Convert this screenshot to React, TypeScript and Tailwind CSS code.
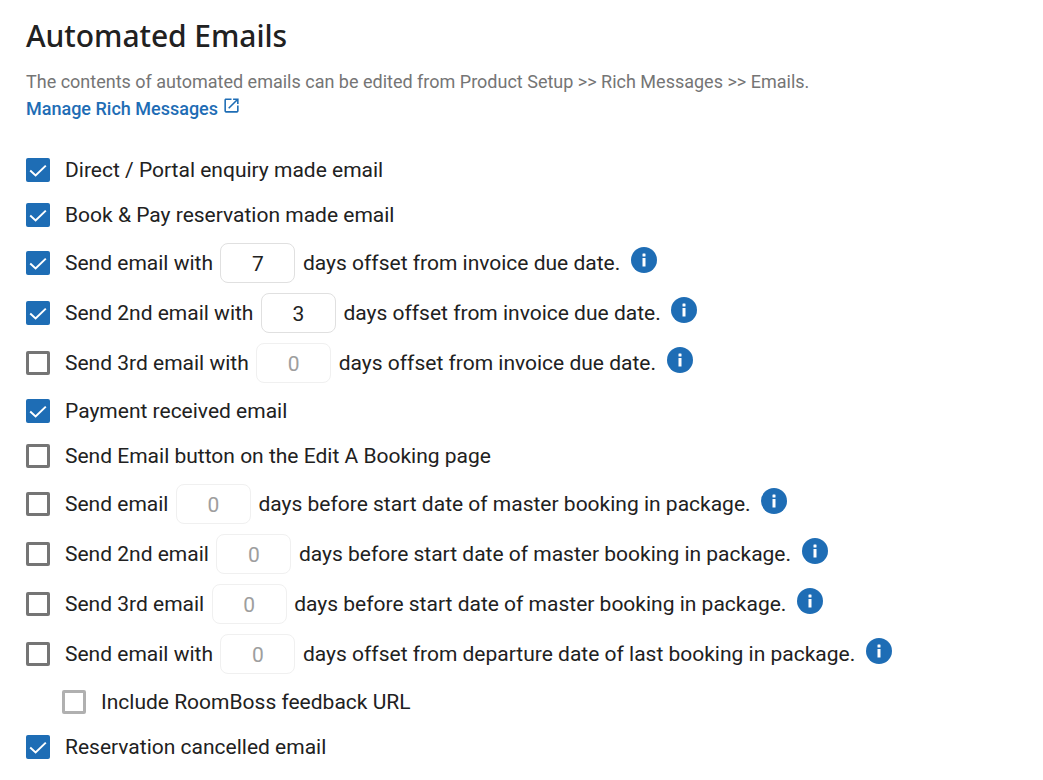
function CheckBox({ checked, muted }: { checked: boolean; muted?: boolean }) {
  if (checked) {
    return (
      <span className="h-6 w-6 shrink-0 rounded-[2px] bg-[#1e6db5]">
        <svg width="24" height="24" viewBox="0 0 24 24" fill="none">
          <path d="M4.2 12.6 L9.6 17.4 L19.8 7.6" stroke="#ffffff" strokeWidth="2" />
        </svg>
      </span>
    )
  }
  return (
    <span
      className={
        muted
          ? 'h-6 w-6 shrink-0 rounded-[2px] border-[3px] border-[#b0b0b0] bg-white'
          : 'h-6 w-6 shrink-0 rounded-[2px] border-[3px] border-[#757575] bg-white'
      }
    />
  )
}

function InfoIcon() {
  return (
    <svg width="26" height="26" viewBox="0 0 26 26" className="ml-[10.6px] -translate-y-[3px] shrink-0">
      <circle cx="13" cy="13" r="13" fill="#1e6db5" />
      <rect x="11.5" y="6.5" width="3" height="3" rx="0.5" fill="#ffffff" />
      <rect x="11.5" y="11" width="3" height="8.5" fill="#ffffff" />
    </svg>
  )
}

function OpenInNew() {
  return (
    <svg width="19" height="19" viewBox="0 0 24 24" fill="#1e6db5" className="ml-[4px] -translate-y-[3px]">
      <path d="M19 19H5V5h7V3H5c-1.11 0-2 .9-2 2v14c0 1.1.89 2 2 2h14c1.1 0 2-.9 2-2v-7h-2v7zM14 3v2h3.59l-9.83 9.83 1.41 1.41L19 6.41V10h2V3h-7z" />
    </svg>
  )
}

function DayInput({ value, enabled }: { value: number; enabled: boolean }) {
  return (
    <span
      className={
        enabled
          ? 'mx-[7.5px] flex h-10 w-[75px] shrink-0 items-center justify-center rounded-lg border border-[#e0e0e0] pt-[2px] text-[#212121]'
          : 'mx-[7.5px] flex h-10 w-[75px] shrink-0 items-center justify-center rounded-lg border border-[#f0f0f0] pt-[2px] text-[#9e9e9e]'
      }
    >
      {value}
    </span>
  )
}

function SimpleRow({ label, checked, nested }: { label: string; checked: boolean; nested?: boolean }) {
  return (
    <div className={nested ? 'my-px ml-9 flex h-11 items-center gap-[15px]' : 'my-px flex h-11 items-center gap-[15px]'}>
      <CheckBox checked={checked} muted={nested} />
      <span>{label}</span>
    </div>
  )
}

function OffsetRow({ before, after, value, checked }: { before: string; after: string; value: number; checked: boolean }) {
  return (
    <div className="flex h-[50px] items-center">
      <CheckBox checked={checked} />
      <span className="ml-[15px]">{before}</span>
      <DayInput value={value} enabled={checked} />
      <span>{after}</span>
      <InfoIcon />
    </div>
  )
}

const DUE = 'days offset from invoice due date.'
const START = 'days before start date of master booking in package.'

export default function App() {
  return (
    <div className="h-[780px] w-[1043px] overflow-hidden bg-white pl-[26px] font-['Roboto',sans-serif] text-[21px] leading-6 text-[#212121]">
      <h1 className="pt-[15px] font-['Noto_Sans',sans-serif] text-[30px] leading-[41px] font-medium tracking-[-0.06px] text-[#212121]">Automated Emails</h1>
      <p className="mt-[12px] text-[18px] leading-[27px] text-[#757575]">
        The contents of automated emails can be edited from Product Setup &gt;&gt; Rich Messages &gt;&gt; Emails.
      </p>
      <a className="flex items-center text-[18px] leading-[27px] font-medium text-[#1e6db5]">
        Manage Rich Messages
        <OpenInNew />
      </a>
      <div className="mt-[26px]">
        <SimpleRow label="Direct / Portal enquiry made email" checked />
        <SimpleRow label="Book & Pay reservation made email" checked />
        <OffsetRow before="Send email with" value={7} after={DUE} checked />
        <OffsetRow before="Send 2nd email with" value={3} after={DUE} checked />
        <OffsetRow before="Send 3rd email with" value={0} after={DUE} checked={false} />
        <SimpleRow label="Payment received email" checked />
        <SimpleRow label="Send Email button on the Edit A Booking page" checked={false} />
        <OffsetRow before="Send email" value={0} after={START} checked={false} />
        <OffsetRow before="Send 2nd email" value={0} after={START} checked={false} />
        <OffsetRow before="Send 3rd email" value={0} after={START} checked={false} />
        <OffsetRow before="Send email with" value={0} after="days offset from departure date of last booking in package." checked={false} />
        <SimpleRow label="Include RoomBoss feedback URL" checked={false} nested />
        <SimpleRow label="Reservation cancelled email" checked />
      </div>
    </div>
  )
}
